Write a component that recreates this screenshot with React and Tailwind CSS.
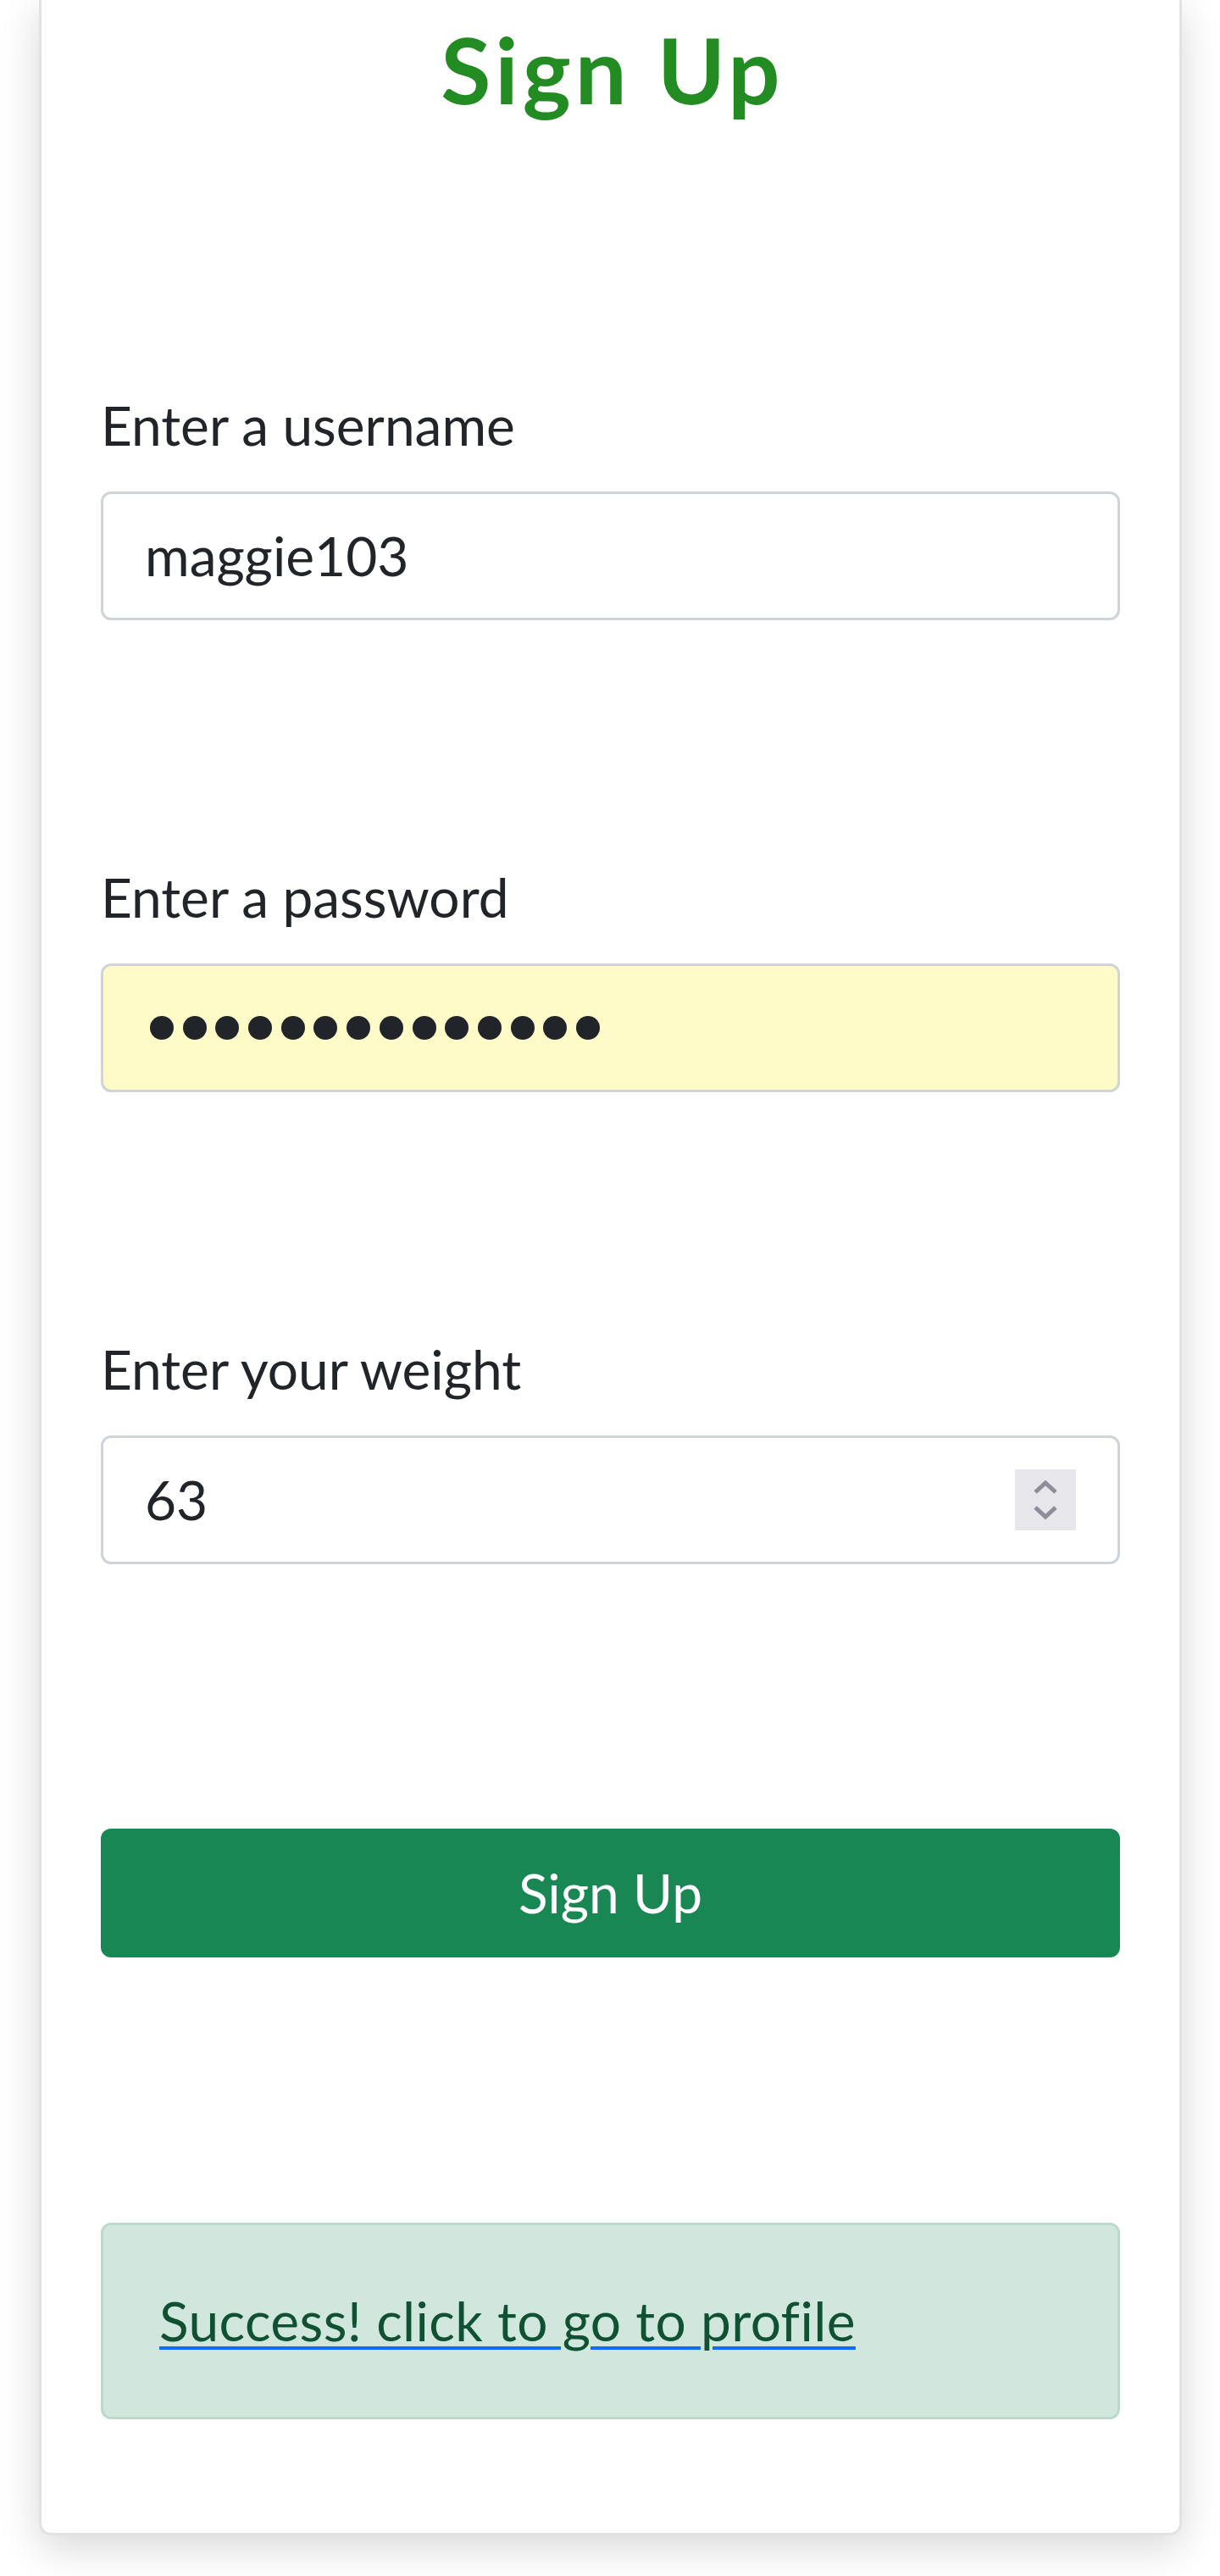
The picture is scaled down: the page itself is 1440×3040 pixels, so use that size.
import React from "react";

const font = { fontFamily: "Lato, 'Noto Sans', sans-serif" };

const Field = ({ label, children, className = "" }) => (
  <div className="flex flex-col">
    <label className="text-[64px] leading-[96px] text-[#212529]">{label}</label>
    <div
      className={`mt-[30px] h-[152px] rounded-[12px] border-[3px] border-[#ced4da] flex items-center pl-[49px] pr-[49px] ${className}`}
    >
      {children}
    </div>
  </div>
);

const Spinner = () => (
  <div className="w-[72px] h-[72px] bg-[#e7e6eb] flex flex-col items-center justify-center gap-[14px]">
    <svg width="30" height="16" viewBox="0 0 30 16" fill="none">
      <path d="M3 14 L15 3 L27 14" stroke="#8f8d9a" strokeWidth="5" />
    </svg>
    <svg width="30" height="16" viewBox="0 0 30 16" fill="none">
      <path d="M3 2 L15 13 L27 2" stroke="#8f8d9a" strokeWidth="5" />
    </svg>
  </div>
);

export default function App() {
  const dots = Array.from({ length: 14 });

  return (
    <div className="min-h-[3040px] bg-white overflow-hidden" style={font}>
      <div className="ml-[46px] w-[1349px] bg-white border-[3px] border-t-0 border-[#e2e2e2] rounded-b-[14px] shadow-[0_14px_48px_rgba(0,0,0,0.16)] px-[70px] pt-[17px] pb-[134px]">
        <h1 className="text-center text-[108px] leading-[1.2] font-bold text-[#228B22] tracking-[5px] pl-[5px]">
          Sign Up
        </h1>

        <div className="mt-[307px] flex flex-col gap-[279px]">
          <Field label="Enter a username">
            <span className="text-[64px] leading-[96px] text-[#212529]">maggie103</span>
          </Field>

          <Field label="Enter a password" className="bg-[#fefbc8]">
            <div className="ml-[6px] flex items-center gap-[10.7px]">
              {dots.map((_, i) => (
                <span key={i} className="w-[28px] h-[28px] rounded-full bg-[#212529]" />
              ))}
            </div>
          </Field>

          <Field label="Enter your weight" className="justify-between">
            <span className="text-[64px] leading-[96px] text-[#212529]">63</span>
            <Spinner />
          </Field>
        </div>

        <button className="mt-[312px] w-full h-[152px] rounded-[12px] bg-[#198754] text-white text-[64px] leading-[96px]">
          Sign Up
        </button>

        <div className="mt-[313px] rounded-[12px] border-[3px] border-[#badbcc] bg-[#d1e7dd] px-[66px] py-[65px]">
          <a
            href="#"
            className="text-[64px] leading-[96px] tracking-[0.4px] text-[#0f5132] underline decoration-[#0d6efd] decoration-[4px] underline-offset-[6px]"
          >
            Success! click to go to profile
          </a>
        </div>
      </div>
    </div>
  );
}
